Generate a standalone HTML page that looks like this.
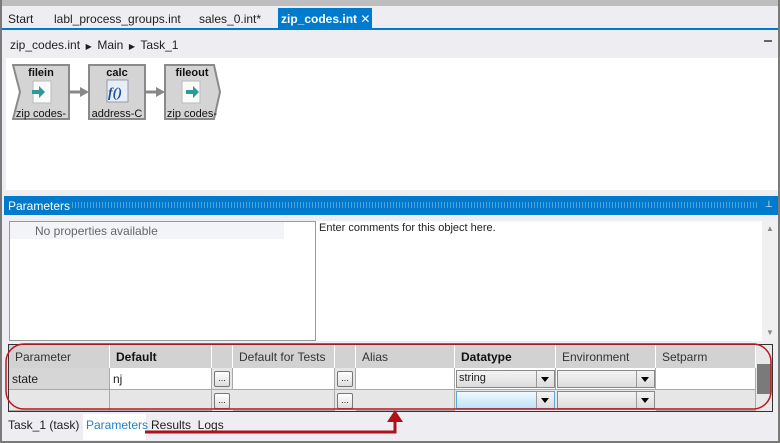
<!DOCTYPE html>
<html><head><style>
*{margin:0;padding:0;box-sizing:border-box}
body{width:780px;height:443px;overflow:hidden;background:#eeeef2;font-family:"Liberation Sans",sans-serif;font-size:12px;color:#1e1e1e;position:relative;white-space:nowrap}
.a{position:absolute}
.tab{position:absolute;top:12px;font-size:12px}
.hd{position:absolute;top:345px;height:23px;background:#d2d2d2;border-right:1px solid #fff;padding:5px 6px;font-size:12px;color:#333}
.c{position:absolute;height:22px;border-right:1px solid #aaa;border-bottom:1px solid #aaa;padding:4px 3px;font-size:12px}
.btn{position:absolute;width:16px;height:16px;border:1px solid #777;border-radius:2px;background:linear-gradient(#fff,#ddd);font-size:9px;text-align:center;line-height:12px}
.dd{position:absolute;height:18px;border:1px solid #888;background:linear-gradient(#f4f4f4,#dcdcdc);font-size:11px;padding:1px 2px}
.dd:after{content:"";position:absolute;right:0;top:0;width:17px;height:16px;border-left:1px solid #999;background:linear-gradient(#f4f4f4,#dcdcdc)}
.dd i{position:absolute;right:5px;top:6px;border:4px solid transparent;border-top:5px solid #000;z-index:2}
</style></head><body>
<div class="a" style="left:0;top:0;width:780px;height:6px;background:#bdbdbd"></div>
<div class="a" style="left:0;top:0;width:2px;height:443px;background:#7a7a7a"></div>
<div class="a" style="right:0;top:0;width:2px;height:443px;background:#7a7a7a"></div>
<div class="a" style="left:0;bottom:0;width:780px;height:2px;background:#7a7a7a"></div>
<div class="tab" style="left:8px">Start</div>
<div class="tab" style="left:54px">labl_process_groups.int</div>
<div class="tab" style="left:199px">sales_0.int*</div>
<div class="a" style="left:278px;top:8px;width:94px;height:21px;background:#007acc;color:#fff;font-weight:bold;padding:4px 3px;font-size:12px">zip_codes.int <span style="font-weight:normal;font-size:12px">✕</span></div>
<div class="a" style="left:2px;top:28px;width:776px;height:2px;background:#007acc"></div>
<div class="a" style="left:10px;top:38px">zip_codes.int <span style="font-size:8px">&nbsp;▶&nbsp;</span> Main <span style="font-size:8px">&nbsp;▶&nbsp;</span> Task_1</div>
<div class="a" style="left:764px;top:40px;width:8px;height:2px;background:#666"></div>
<div class="a" style="left:6px;top:58px;width:772px;height:132px;background:#fff"></div>
<svg class="a" style="left:12px;top:63px" width="215" height="60">
<polygon points="1,2 57,2 57,56 1,56 8,29" fill="#d4d4d4" stroke="#8a8a8a" stroke-width="2"/>
<rect x="77" y="2" width="56" height="54" fill="#d4d4d4" stroke="#8a8a8a" stroke-width="2"/>
<polygon points="153,2 202,2 208,29 202,56 153,56" fill="#d4d4d4" stroke="#8a8a8a" stroke-width="2"/>
<line x1="58" y1="29" x2="70" y2="29" stroke="#888" stroke-width="3"/><polygon points="68,24 77,29 68,34" fill="#888"/>
<line x1="134" y1="29" x2="146" y2="29" stroke="#888" stroke-width="3"/><polygon points="144,24 153,29 144,34" fill="#888"/>
<rect x="21" y="18" width="18" height="22" fill="#fafafa" stroke="#bbb"/><path d="M20 27h7v-4l6 6-6 6v-4h-7z" fill="#2a9a9a"/>
<rect x="95" y="17" width="21" height="22" fill="#e8eef8" stroke="#99a"/><text x="96" y="34" font-family="Liberation Serif" font-style="italic" font-weight="bold" font-size="14" fill="#1f4e9a">f()</text>
<rect x="170" y="18" width="18" height="22" fill="#fafafa" stroke="#bbb"/><path d="M174 27h7v-4l6 6-6 6v-4h-7z" fill="#2a9a9a"/>
<g font-family="Liberation Sans" font-size="11" text-anchor="middle" fill="#111"><text x="29" y="13" font-weight="bold">filein</text><text x="105" y="13" font-weight="bold">calc</text><text x="180" y="13" font-weight="bold">fileout</text>
<text x="29" y="54">zip codes-</text><text x="105" y="54">address-C</text><text x="180" y="54">zip codes-</text></g>
</svg>
<div class="a" style="left:4px;top:196px;width:774px;height:19px;background:#007acc;color:#fff;padding:3px 4px;font-size:12px">Parameters</div>
<div class="a" style="left:72px;top:202px;width:686px;height:6px;background:repeating-linear-gradient(90deg,#4ea3df 0 1px,transparent 1px 3px)"></div>
<div class="a" style="left:765px;top:199px;color:#fff;font-size:9px">⊥</div>
<div class="a" style="left:9px;top:221px;width:307px;height:120px;background:#fff;border:1px solid #999"></div>
<div class="a" style="left:10px;top:222px;width:274px;height:17px;background:#f2f4f8;color:#666;padding:2px 25px">No properties available</div>
<div class="a" style="left:316px;top:221px;width:446px;height:120px;background:#fff;padding:1px 3px;font-size:11px">Enter comments for this object here.</div>
<div class="a" style="left:762px;top:221px;width:16px;height:120px;background:#f0f0f0"></div>
<div class="a" style="left:766px;top:224px;color:#888;font-size:8px">▲</div>
<div class="a" style="left:766px;top:328px;color:#888;font-size:8px">▼</div>
<div class="a" style="left:8px;top:344px;width:765px;height:68px;background:#e6e6e6;border:1px solid #333"></div>
<div class="hd" style="left:9px;width:101px">Parameter</div>
<div class="hd" style="left:110px;width:102px;font-weight:bold;color:#111">Default</div>
<div class="hd" style="left:212px;width:21px"></div>
<div class="hd" style="left:233px;width:102px">Default for Tests</div>
<div class="hd" style="left:335px;width:21px"></div>
<div class="hd" style="left:356px;width:99px">Alias</div>
<div class="hd" style="left:455px;width:101px;font-weight:bold;color:#111">Datatype</div>
<div class="hd" style="left:556px;width:100px">Environment</div>
<div class="hd" style="left:656px;width:100px">Setparm</div>
<div class="c" style="left:9px;top:368px;width:101px;background:#d6d6d6">state</div>
<div class="c" style="left:110px;top:368px;width:102px;background:#fff">nj</div>
<div class="c" style="left:212px;top:368px;width:21px;background:#e6e6e6"></div>
<div class="c" style="left:233px;top:368px;width:102px;background:#fff"></div>
<div class="c" style="left:335px;top:368px;width:21px;background:#e6e6e6"></div>
<div class="c" style="left:356px;top:368px;width:99px;background:#fff"></div>
<div class="c" style="left:455px;top:368px;width:101px;background:#fff"></div>
<div class="c" style="left:556px;top:368px;width:100px;background:#fff"></div>
<div class="c" style="left:656px;top:368px;width:100px;background:#fff"></div>
<div class="c" style="left:9px;top:390px;width:101px;height:21px;background:#e6e6e6"></div>
<div class="c" style="left:110px;top:390px;width:102px;height:21px;background:#e6e6e6"></div>
<div class="c" style="left:233px;top:390px;width:102px;height:21px;background:#e6e6e6"></div>
<div class="c" style="left:356px;top:390px;width:99px;height:21px;background:#e6e6e6"></div>
<div class="c" style="left:656px;top:390px;width:100px;height:21px;background:#e6e6e6"></div>
<div class="btn" style="left:214px;top:371px">...</div><div class="btn" style="left:337px;top:371px">...</div>
<div class="btn" style="left:214px;top:393px">...</div><div class="btn" style="left:337px;top:393px">...</div>
<div class="dd" style="left:456px;top:370px;width:99px">string<i></i></div>
<div class="dd" style="left:557px;top:370px;width:98px"><i></i></div>
<div class="dd" style="left:456px;top:391px;width:99px;background:linear-gradient(#f0f8ff,#bfe3f8);border-color:#5aa7d8"><i></i></div>
<div class="dd" style="left:557px;top:391px;width:98px"><i></i></div>
<div class="a" style="left:756px;top:345px;width:16px;height:66px;background:#e8e8e8"></div>
<div class="a" style="left:757px;top:364px;width:14px;height:30px;background:#7a7a7a"></div>
<div class="a" style="left:8px;top:418px;font-size:12px">Task_1 (task)</div>
<div class="a" style="left:83px;top:414px;width:63px;height:26px;background:#fff"></div>
<div class="a" style="left:86px;top:418px;color:#1e7fcf">Parameters</div>
<div class="a" style="left:151px;top:418px">Results &nbsp;Logs</div>
<svg class="a" style="left:0;top:340px" width="780" height="103">
<rect x="6" y="4" width="765" height="65" rx="18" fill="none" stroke="#c0141c" stroke-width="1.5"/>
<path d="M145 92H395V80" fill="none" stroke="#b0101a" stroke-width="3"/>
<polygon points="387,82 395,70 403,82" fill="#b0101a"/>
</svg>
</body></html>
